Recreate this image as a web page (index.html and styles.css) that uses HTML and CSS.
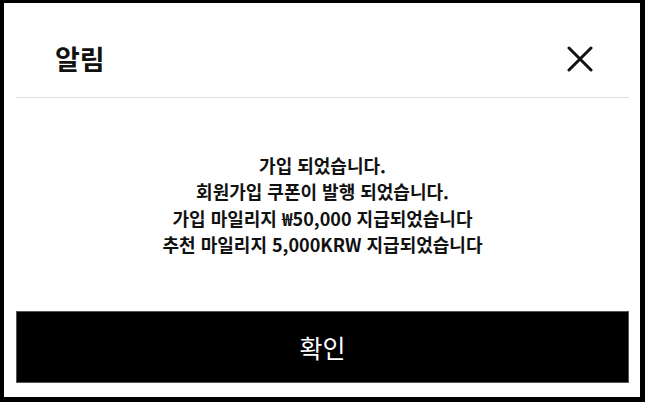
FILE: index.html
```html
<!DOCTYPE html>
<html lang="ko">
<head>
    <meta charset="UTF-8">
    <meta name="viewport" content="width=device-width, initial-scale=1.0">
    <title>알림</title>
    <link rel="stylesheet" href="styles.css">
</head>
<body>
    <div class="modal">
        <div class="modal-header">
            <h2 class="modal-title">알림</h2>
            <button type="button" class="close-btn" aria-label="닫기">
                <svg width="26" height="26" viewBox="0 0 26 26">
                    <path d="M2 2 L24 24 M24 2 L2 24" stroke="#111" stroke-width="3" stroke-linecap="round" fill="none"/>
                </svg>
            </button>
        </div>
        <div class="modal-body">
            <p class="message">
                가입 되었습니다.<br>
                회원가입 쿠폰이 발행 되었습니다.<br>
                가입 마일리지 ₩50,000 지급되었습니다<br>
                추천 마일리지 5,000KRW 지급되었습니다
            </p>
        </div>
        <button type="button" class="confirm-btn">확인</button>
    </div>
</body>
</html>
```

FILE: styles.css
```css
html, body {
    margin: 0;
    padding: 0;
    height: 100%;
}
body {
    background-color: #000;
    font-family: "Noto Sans CJK KR", "Noto Sans", sans-serif;
    padding: 3px 5px 5px 4px;
    box-sizing: border-box;
}
.modal {
    background-color: #fff;
    height: 100%;
    padding: 0 11px 14px 12px;
    box-sizing: border-box;
    display: flex;
    flex-direction: column;
}
.modal-header {
    display: flex;
    justify-content: space-between;
    align-items: center;
    padding: 40px 36px 22px 39px;
    border-bottom: 1px solid #ddd;
}
.modal-title {
    margin: 0;
    font-size: 27px;
    line-height: 32px;
    font-weight: bold;
    color: #111;
}
.close-btn {
    background: none;
    border: none;
    padding: 0;
    cursor: pointer;
    display: flex;
}
.modal-body {
    flex: 1;
    display: flex;
    align-items: center;
    justify-content: center;
}
.message {
    margin: 0;
    text-align: center;
    font-size: 18px;
    line-height: 26.5px;
    font-weight: bold;
    color: #111;
}
.confirm-btn {
    height: 72px;
    background-color: #000;
    border: 1px solid #555;
    color: #fff;
    font-family: inherit;
    font-size: 25px;
    cursor: pointer;
}
```
